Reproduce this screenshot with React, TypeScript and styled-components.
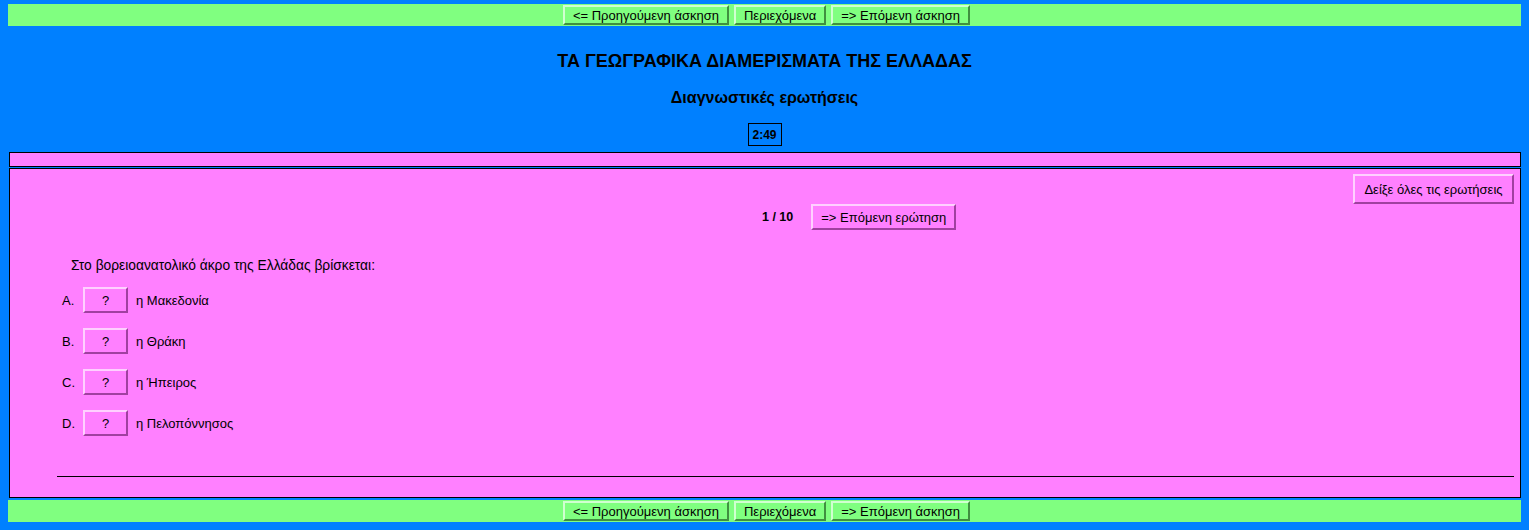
import styled, { createGlobalStyle } from 'styled-components';

const GlobalStyle = createGlobalStyle`
  html, body {
    margin: 0;
    padding: 0;
    background: #0080ff;
    font-family: "Liberation Sans", Arial, sans-serif;
    color: #000;
  }
`;

const Page = styled.div`
  padding: 4px 8px 8px 8px;
  display: flex;
  flex-direction: column;
`;

const NavBar = styled.div`
  height: 22px;
  background: #80ff80;
  display: flex;
  justify-content: center;
  align-items: center;
  gap: 5px;
  padding-left: 4px;
`;

interface BtnProps {
  $tone: 'green' | 'pink';
}

const Button = styled.button<BtnProps>`
  font-family: "Liberation Sans", Arial, sans-serif;
  font-size: 13px;
  color: #000;
  background: ${p => (p.$tone === 'green' ? '#80ff80' : '#ff80ff')};
  border: 2px solid;
  border-color: ${p =>
    p.$tone === 'green'
      ? '#d0ffd0 #409040 #409040 #d0ffd0'
      : '#ffd0ff #a040a0 #a040a0 #ffd0ff'};
  padding: 0 8px;
  margin: 0;
  cursor: pointer;
`;

const NavButton = styled(Button)`
  height: 20px;
  padding: 0 8px;
`;

const Header = styled.div`
  display: flex;
  flex-direction: column;
  align-items: center;
  height: 126px;
`;

const Title = styled.h1`
  margin: 25px 0 0 0;
  font-size: 18px;
  line-height: 21px;
  font-weight: bold;
`;

const Subtitle = styled.h2`
  margin: 16px 0 0 0;
  font-size: 16px;
  line-height: 19px;
  font-weight: bold;
`;

const Timer = styled.div`
  margin-top: 16px;
  box-sizing: border-box;
  height: 23px;
  width: 34px;
  border: 1px solid #000;
  font-size: 12px;
  font-weight: bold;
  display: flex;
  align-items: center;
  justify-content: center;
`;

const ThinBar = styled.div`
  margin-left: 1px;
  height: 15px;
  box-sizing: border-box;
  border: 1px solid #000;
  background: #ff80ff;
`;

const QuizBox = styled.div`
  margin: 1px 0 2px 1px;
  height: 330px;
  box-sizing: border-box;
  border: 1px solid #000;
  background: #ff80ff;
  padding: 5px 6px 0 0;
  display: flex;
  flex-direction: column;
`;

const TopRow = styled.div`
  display: flex;
  justify-content: flex-end;
`;

const ShowAllButton = styled(Button)`
  height: 30px;
  width: 161px;
  padding: 0;
`;

const Counter = styled.div`
  display: flex;
  align-items: center;
  padding-left: 752px;
  gap: 18px;
`;

const CounterText = styled.span`
  font-size: 12.5px;
  font-weight: bold;
`;

const NextButton = styled(Button)`
  height: 26px;
  width: 145px;
  padding: 0;
`;

const Question = styled.p`
  margin: 28px 0 0 61px;
  font-size: 13.8px;
  line-height: 15px;
`;

const Answers = styled.div`
  margin-top: 14px;
  display: flex;
  flex-direction: column;
  gap: 15px;
  padding-left: 52px;
`;

const AnswerRow = styled.div`
  display: flex;
  align-items: center;
  height: 26px;
  font-size: 13px;
`;

const Letter = styled.span`
  width: 21px;
`;

const AnswerButton = styled(Button)`
  height: 26px;
  width: 45px;
  padding: 0;
  margin-right: 8px;
`;

const Rule = styled.div`
  margin: 40px 0 0 47px;
  height: 1px;
  background: #000;
`;

const answers = [
  { letter: 'A.', text: 'η Μακεδονία' },
  { letter: 'B.', text: 'η Θράκη' },
  { letter: 'C.', text: 'η Ήπειρος' },
  { letter: 'D.', text: 'η Πελοπόννησος' },
];

const Nav = () => (
  <NavBar>
    <NavButton $tone="green">&lt;= Προηγούμενη άσκηση</NavButton>
    <NavButton $tone="green">Περιεχόμενα</NavButton>
    <NavButton $tone="green">=&gt; Επόμενη άσκηση</NavButton>
  </NavBar>
);

export default function App() {
  return (
    <>
      <GlobalStyle />
      <Page>
        <Nav />
        <Header>
          <Title>ΤΑ ΓΕΩΓΡΑΦΙΚΑ ΔΙΑΜΕΡΙΣΜΑΤΑ ΤΗΣ ΕΛΛΑΔΑΣ</Title>
          <Subtitle>Διαγνωστικές ερωτήσεις</Subtitle>
          <Timer>2:49</Timer>
        </Header>
        <ThinBar />
        <QuizBox>
          <TopRow>
            <ShowAllButton $tone="pink">Δείξε όλες τις ερωτήσεις</ShowAllButton>
          </TopRow>
          <Counter>
            <CounterText>1 / 10</CounterText>
            <NextButton $tone="pink">=&gt; Επόμενη ερώτηση</NextButton>
          </Counter>
          <Question>Στο βορειοανατολικό άκρο της Ελλάδας βρίσκεται:</Question>
          <Answers>
            {answers.map(a => (
              <AnswerRow key={a.letter}>
                <Letter>{a.letter}</Letter>
                <AnswerButton $tone="pink">?</AnswerButton>
                <span>{a.text}</span>
              </AnswerRow>
            ))}
          </Answers>
          <Rule />
        </QuizBox>
        <Nav />
      </Page>
    </>
  );
}
